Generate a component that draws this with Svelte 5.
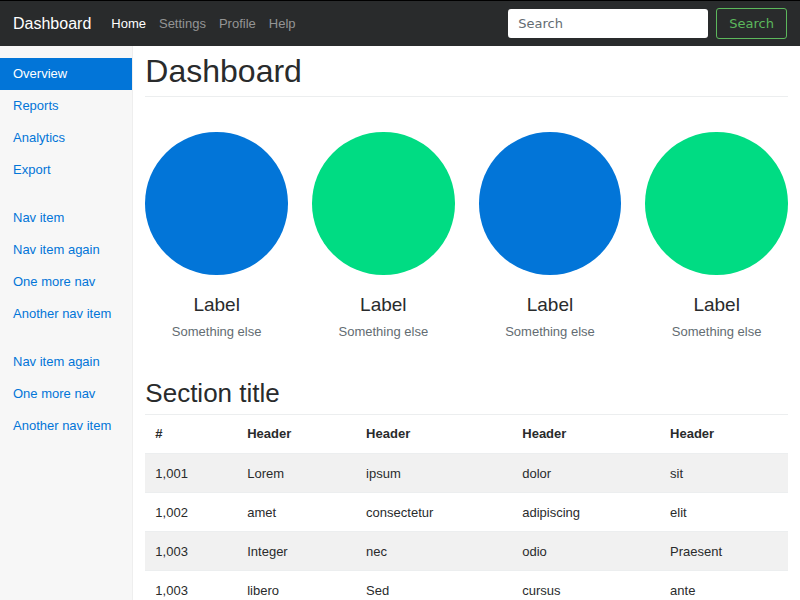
<script>
  const links = ['Home', 'Settings', 'Profile', 'Help'];
  const groups = [
    ['Overview', 'Reports', 'Analytics', 'Export'],
    ['Nav item', 'Nav item again', 'One more nav', 'Another nav item'],
    ['Nav item again', 'One more nav', 'Another nav item']
  ];
  const circles = ['blue', 'green', 'blue', 'green'];
  const headers = ['#', 'Header', 'Header', 'Header', 'Header'];
  const rows = [
    ['1,001', 'Lorem', 'ipsum', 'dolor', 'sit'],
    ['1,002', 'amet', 'consectetur', 'adipiscing', 'elit'],
    ['1,003', 'Integer', 'nec', 'odio', 'Praesent'],
    ['1,003', 'libero', 'Sed', 'cursus', 'ante']
  ];
  let query = $state('');
</script>

<div class="page">
  <header class="navbar">
    <a class="brand" href="#dashboard">Dashboard</a>
    <nav class="links" aria-label="Main">
      {#each links as link, i}
        <a href="#{link.toLowerCase()}" class:current={i === 0}>{link}</a>
      {/each}
    </nav>
    <form class="search" onsubmit={(e) => e.preventDefault()}>
      <input type="text" placeholder="Search" aria-label="Search" bind:value={query} />
      <button type="submit">Search</button>
    </form>
  </header>

  <div class="body">
    <nav class="sidebar" aria-label="Sections">
      {#each groups as group, g}
        <ul>
          {#each group as item, i}
            <li><a href="#section-{g}-{i}" class:active={g === 0 && i === 0}>{item}</a></li>
          {/each}
        </ul>
      {/each}
    </nav>

    <main>
      <h1>Dashboard</h1>
      <section class="placeholders">
        {#each circles as color}
          <div class="placeholder">
            <div class="circle {color}"></div>
            <h4>Label</h4>
            <p>Something else</p>
          </div>
        {/each}
      </section>

      <h2>Section title</h2>
      <table>
        <colgroup>
          <col class="c1" /><col class="c2" /><col class="c3" /><col class="c4" /><col class="c5" />
        </colgroup>
        <thead>
          <tr>
            {#each headers as header}
              <th scope="col">{header}</th>
            {/each}
          </tr>
        </thead>
        <tbody>
          {#each rows as row}
            <tr>
              {#each row as cell}
                <td>{cell}</td>
              {/each}
            </tr>
          {/each}
        </tbody>
      </table>
    </main>
  </div>
</div>

<style>
  :global(body) {
    margin: 0;
    background: #fff;
  }

  .page {
    display: flex;
    flex-direction: column;
    height: 100vh;
    overflow: hidden;
    color: #292b2c;
    font: 13px/20px 'Liberation Sans', Arial, sans-serif;
  }

  .page,
  .page * {
    box-sizing: border-box;
  }

  a {
    text-decoration: none;
  }

  .navbar {
    display: flex;
    flex: none;
    align-items: center;
    height: 46px;
    padding: 0 13px;
    border-top: 1px solid #000;
    background: #292b2c;
  }

  .brand {
    margin-right: 20px;
    color: #fff;
    font-size: 16px;
  }

  .links {
    display: flex;
    flex: 1;
    gap: 13px;
  }

  .links a {
    color: #949595;
  }

  .links a.current {
    color: #fff;
  }

  .search {
    display: flex;
    align-items: center;
    gap: 8px;
  }

  .search input,
  .search button {
    border-radius: 3px;
    font: 13px/16px 'DejaVu Sans', sans-serif;
  }

  .search input {
    width: 200px;
    height: 29px;
    padding: 0 10px;
    border: 0;
    background: #fff;
    color: #464a4c;
  }

  .search input::placeholder {
    color: #636c72;
    opacity: 1;
  }

  .search button {
    height: 31px;
    padding: 0 12px;
    border: 1px solid #5cb85c;
    background: transparent;
    color: #5cb85c;
    cursor: pointer;
  }

  .body {
    display: flex;
    flex: 1;
    min-height: 0;
  }

  .sidebar {
    flex: none;
    width: 16.6667%;
    padding-top: 12px;
    border-right: 1px solid #eee;
    background: #f7f7f7;
    overflow: auto;
  }

  .sidebar ul {
    margin: 0 0 16px;
    padding: 0;
    list-style: none;
  }

  .sidebar a {
    display: block;
    padding: 6px 13px;
    color: #0275d8;
  }

  .sidebar a.active {
    background: #0275d8;
    color: #fff;
  }

  main {
    flex: 1;
    min-width: 0;
    padding: 6px 12px 0;
    overflow: auto;
    scrollbar-width: none;
  }

  h1,
  h2,
  h4 {
    margin: 0;
    font-weight: 400;
  }

  h1 {
    padding-bottom: 6px;
    border-bottom: 1px solid #eceeef;
    font-size: 32px;
    line-height: 38px;
  }

  .placeholders {
    display: grid;
    grid-template-columns: repeat(4, 1fr);
    gap: 24px;
    padding: 35px 0 36px;
    text-align: center;
  }

  .circle {
    aspect-ratio: 1;
    border-radius: 50%;
  }

  .blue {
    background: #0275d8;
  }

  .green {
    background: #00dc83;
  }

  h4 {
    margin-top: 19px;
    font-size: 19px;
    line-height: 22px;
  }

  p {
    margin: 6px 0 0;
    color: #636c72;
  }

  h2 {
    margin-bottom: 6px;
    font-size: 26px;
    line-height: 30px;
  }

  table {
    width: 100%;
    border-collapse: separate;
    border-spacing: 0;
    table-layout: fixed;
  }

  .c1 {
    width: 14.3%;
  }

  .c2 {
    width: 18.5%;
  }

  .c3 {
    width: 24.3%;
  }

  .c4 {
    width: 23%;
  }

  .c5 {
    width: 19.9%;
  }

  th,
  td {
    padding: 9px 10px;
    border-top: 1px solid #eceeef;
    text-align: left;
  }

  td {
    padding: 10px 10px 8px;
  }

  tbody tr:nth-child(odd) {
    background: #f1f1f1;
  }
</style>
